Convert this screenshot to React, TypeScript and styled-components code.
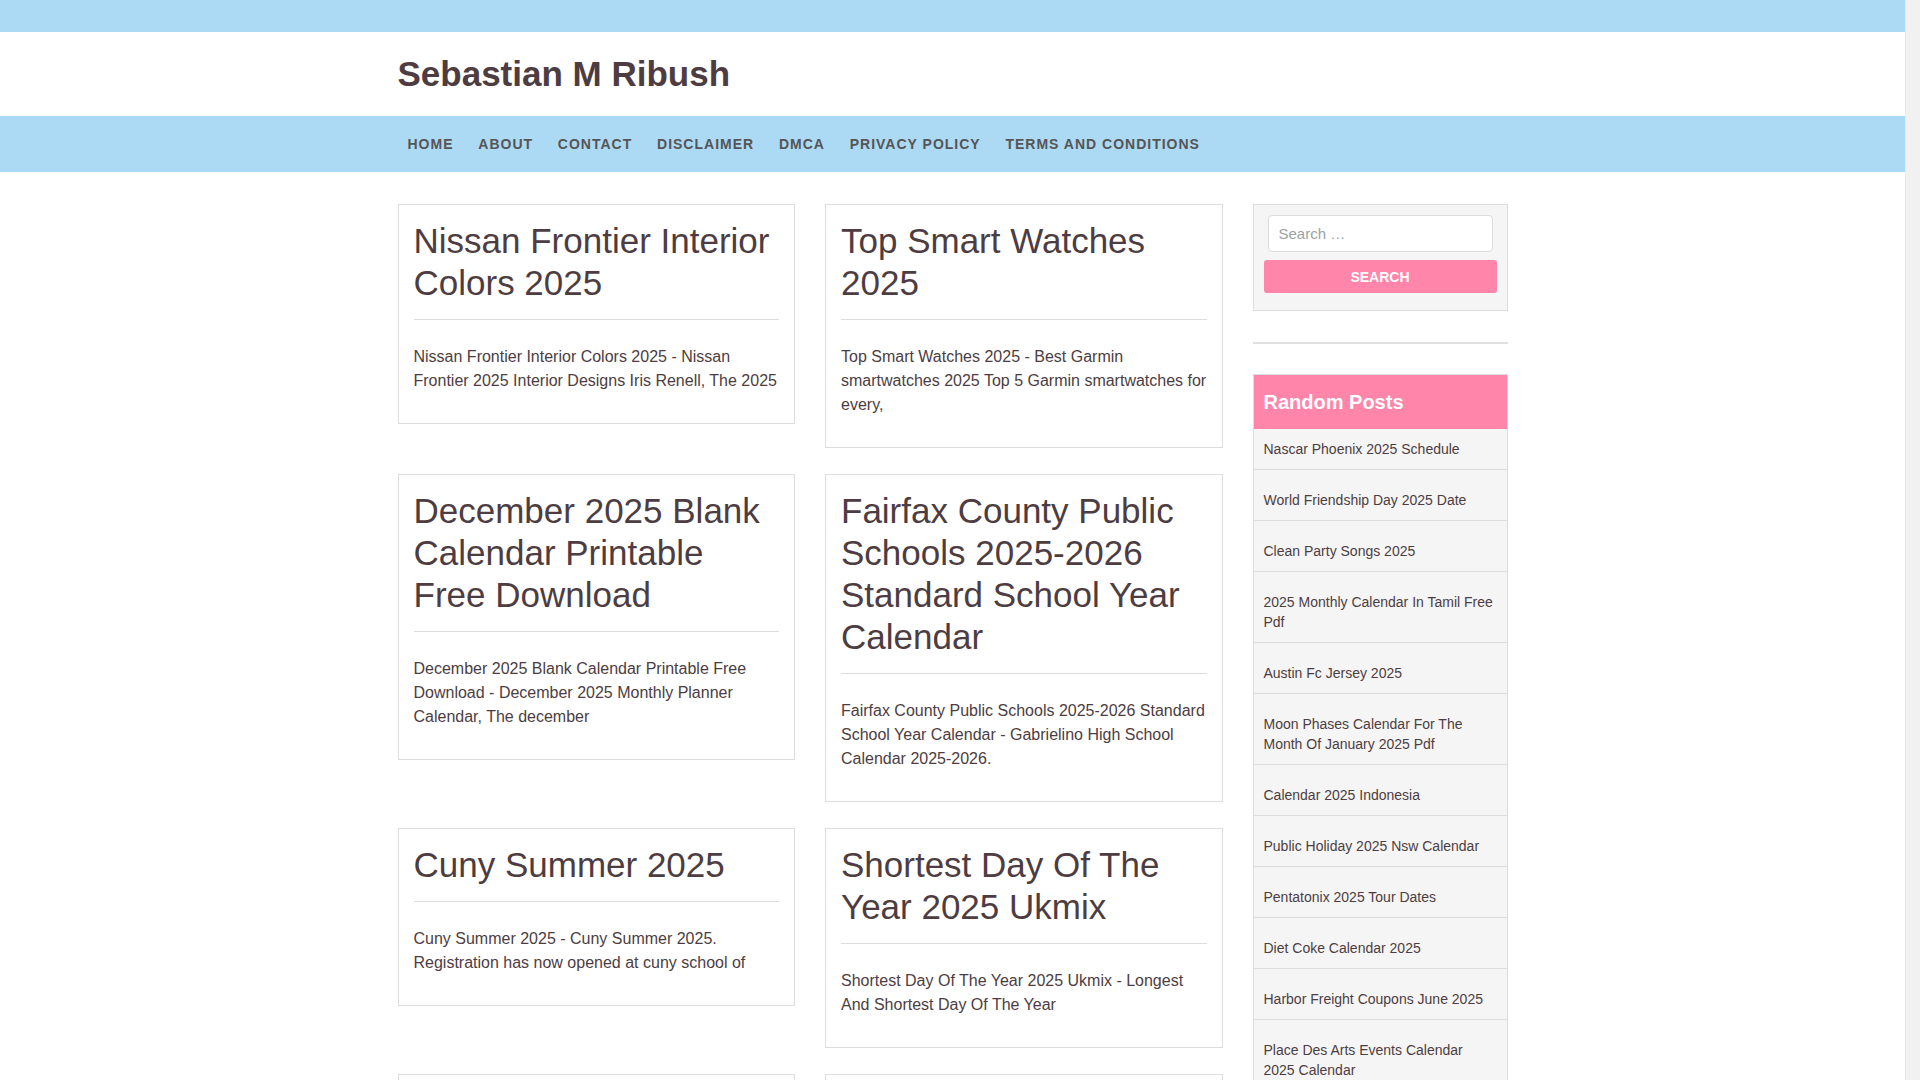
import React from "react";
import styled, { createGlobalStyle } from "styled-components";

const GlobalStyle = createGlobalStyle`
  html, body { margin: 0; padding: 0; background: #fff; }
  body { font-family: "Liberation Sans", Arial, sans-serif; color: #4d3d42; }
  * { box-sizing: border-box; }
`;

const TEXT = "#4d3d42";
const BLUE = "#acd9f3";
const PINK = "#ff85aa";

const Page = styled.div`
  margin-right: 15px;
`;

const ScrollTrack = styled.div`
  position: fixed;
  top: 0;
  right: 0;
  bottom: 0;
  width: 15px;
  background: #f1f1f1;
  border-left: 1px solid #e8e8e8;
`;

const TopBar = styled.div`
  height: 32px;
  background: ${BLUE};
`;

const Container = styled.div`
  width: 1110px;
  margin: 0 auto;
`;

const Header = styled.header`
  height: 84px;
  display: flex;
  align-items: center;
`;

const SiteTitle = styled.h1`
  margin: 0;
  font-size: 35px;
  font-weight: 700;
  line-height: 1.2;
  color: ${TEXT};
`;

const NavBar = styled.nav`
  background: ${BLUE};
  height: 56px;
`;

const NavList = styled.ul`
  list-style: none;
  margin: 0 0 0 -2.4px;
  padding: 0;
  height: 56px;
  display: flex;
  align-items: center;
`;

const NavLink = styled.a`
  display: block;
  padding: 0 12.4px;
  font-size: 14px;
  font-weight: 700;
  letter-spacing: 1px;
  text-transform: uppercase;
  color: #555;
  text-decoration: none;
  line-height: 56px;
`;

const Layout = styled.div`
  display: grid;
  grid-template-columns: 1fr 255px;
  column-gap: 30px;
  padding-top: 32px;
  padding-bottom: 60px;
`;

const PostGrid = styled.div`
  display: grid;
  grid-template-columns: 1fr 1fr;
  column-gap: 30px;
  row-gap: 26px;
  align-items: start;
`;

const Card = styled.article`
  border: 1px solid #ddd;
  background: #fff;
  padding: 15px;
`;

const CardTitle = styled.h2`
  margin: 0;
  padding-bottom: 15px;
  border-bottom: 1px solid #ddd;
  font-size: 35px;
  font-weight: 400;
  line-height: 42px;
  color: ${TEXT};
`;

const Excerpt = styled.p`
  margin: 25px 0 15px;
  font-size: 16px;
  line-height: 24px;
  color: ${TEXT};
`;

const Sidebar = styled.aside`
  display: flex;
  flex-direction: column;
`;

const SearchWidget = styled.form`
  background: #f5f5f5;
  border: 1px solid #ddd;
  padding: 10px 10px 17px;
  display: flex;
  flex-direction: column;
  gap: 8px;
`;

const SearchInput = styled.input`
  margin: 0 4px;
  height: 37px;
  border: 1px solid #ddd;
  border-radius: 4px;
  background: #fff;
  padding: 0 10px;
  font-family: "Liberation Sans", Arial, sans-serif;
  font-size: 15px;
  color: ${TEXT};
  outline: none;
  &::placeholder { color: #9aa3a3; }
`;

const SearchButton = styled.button`
  height: 33px;
  border: none;
  border-radius: 3px;
  background: ${PINK};
  color: #fff;
  font-family: "Liberation Sans", Arial, sans-serif;
  font-size: 14px;
  font-weight: 700;
  text-transform: uppercase;
  cursor: pointer;
`;

const Separator = styled.hr`
  margin: 31px 0 30px;
  border: none;
  border-top: 2px solid #e0e0e0;
  height: 0;
`;

const Widget = styled.section`
  background: #f5f5f5;
  border: 1px solid #ddd;
`;

const WidgetTitle = styled.h3`
  margin: 0;
  height: 54px;
  padding: 0 10px;
  display: flex;
  align-items: center;
  background: ${PINK};
  color: #fff;
  font-size: 20px;
  font-weight: 700;
`;

const PostList = styled.ul`
  list-style: none;
  margin: 0;
  padding: 0;
`;

const PostItem = styled.li`
  padding: 20px 10px 10px;
  border-bottom: 1px solid #ddd;
  font-size: 14px;
  line-height: 20px;
  &:first-child { padding-top: 10px; }
`;

const PostLink = styled.a`
  color: ${TEXT};
  text-decoration: none;
`;

const navItems = ["Home", "About", "Contact", "Disclaimer", "DMCA", "Privacy Policy", "Terms and Conditions"];

const posts = [
  {
    title: "Nissan Frontier Interior Colors 2025",
    excerpt: "Nissan Frontier Interior Colors 2025 - Nissan Frontier 2025 Interior Designs Iris Renell, The 2025",
  },
  {
    title: "Top Smart Watches 2025",
    excerpt: "Top Smart Watches 2025 - Best Garmin smartwatches 2025 Top 5 Garmin smartwatches for every,",
  },
  {
    title: "December 2025 Blank Calendar Printable Free Download",
    excerpt: "December 2025 Blank Calendar Printable Free Download - December 2025 Monthly Planner Calendar, The december",
  },
  {
    title: "Fairfax County Public Schools 2025-2026 Standard School Year Calendar",
    excerpt: "Fairfax County Public Schools 2025-2026 Standard School Year Calendar - Gabrielino High School Calendar 2025-2026.",
  },
  {
    title: "Cuny Summer 2025",
    excerpt: "Cuny Summer 2025 - Cuny Summer 2025. Registration has now opened at cuny school of",
  },
  {
    title: "Shortest Day Of The Year 2025 Ukmix",
    excerpt: "Shortest Day Of The Year 2025 Ukmix - Longest And Shortest Day Of The Year",
  },
  {
    title: "Nfl Schedule 2025 Week 1",
    excerpt: "Nfl Schedule 2025 Week 1 - NFL Week 1 schedule, The 2025 season kicks off",
  },
  {
    title: "Easter Sunday 2025 Date",
    excerpt: "Easter Sunday 2025 Date - When is Easter 2025? Dates and traditions",
  },
];

const randomPosts = [
  "Nascar Phoenix 2025 Schedule",
  "World Friendship Day 2025 Date",
  "Clean Party Songs 2025",
  "2025 Monthly Calendar In Tamil Free Pdf",
  "Austin Fc Jersey 2025",
  "Moon Phases Calendar For The Month Of January 2025 Pdf",
  "Calendar 2025 Indonesia",
  "Public Holiday 2025 Nsw Calendar",
  "Pentatonix 2025 Tour Dates",
  "Diet Coke Calendar 2025",
  "Harbor Freight Coupons June 2025",
  "Place Des Arts Events Calendar 2025 Calendar",
  "Bmw X5 2025 Release Date",
];

export default function App() {
  return (
    <>
      <GlobalStyle />
      <Page>
        <TopBar />
        <Container>
          <Header>
            <SiteTitle>Sebastian M Ribush</SiteTitle>
          </Header>
        </Container>
        <NavBar>
          <Container>
            <NavList>
              {navItems.map((n) => (
                <li key={n}>
                  <NavLink href="#">{n}</NavLink>
                </li>
              ))}
            </NavList>
          </Container>
        </NavBar>
        <Container>
          <Layout>
            <PostGrid>
              {posts.map((p) => (
                <Card key={p.title}>
                  <CardTitle>{p.title}</CardTitle>
                  <Excerpt>{p.excerpt}</Excerpt>
                </Card>
              ))}
            </PostGrid>
            <Sidebar>
              <SearchWidget onSubmit={(e) => e.preventDefault()}>
                <SearchInput type="search" placeholder="Search …" />
                <SearchButton type="submit">Search</SearchButton>
              </SearchWidget>
              <Separator />
              <Widget>
                <WidgetTitle>Random Posts</WidgetTitle>
                <PostList>
                  {randomPosts.map((t) => (
                    <PostItem key={t}>
                      <PostLink href="#">{t}</PostLink>
                    </PostItem>
                  ))}
                </PostList>
              </Widget>
            </Sidebar>
          </Layout>
        </Container>
      </Page>
      <ScrollTrack />
    </>
  );
}
